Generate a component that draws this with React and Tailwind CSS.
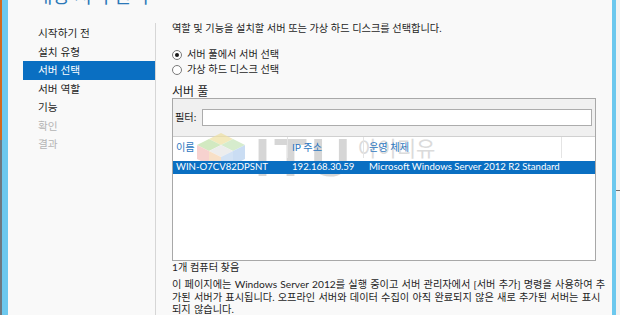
import React from 'react';

const navItems = [
  { label: '시작하기 전' },
  { label: '설치 유형' },
  { label: '서버 선택', active: true },
  { label: '서버 역할' },
  { label: '기능' },
  { label: '확인', disabled: true },
  { label: '결과', disabled: true },
];

const Radio = ({ checked, label }) => (
  <div className="flex items-center h-[15px]">
    <span className="w-[10px] h-[10px] rounded-full border border-[#7a7a7a] bg-white flex items-center justify-center">
      {checked && <span className="w-[4px] h-[4px] rounded-full bg-[#1a1a1a]" />}
    </span>
    <span className="ml-[5px]">{label}</span>
  </div>
);

// faded ITU watermark, drawn under the list text
const Watermark = () => (
  <div className="absolute left-[20px] top-[-6px] flex items-start opacity-70 pointer-events-none">
    <svg width="56" height="38" viewBox="0 0 56 38">
      <polygon points="28,2 40,8 28,14 16,8" fill="#eee0a0" />
      <polygon points="16,8 28,14 16,20 4,14" fill="#bfe0a8" />
      <polygon points="40,8 52,14 40,20 28,14" fill="#c6e4b8" />
      <polygon points="28,14 40,20 28,26 16,20" fill="#e6e6e6" />
      <polygon points="4,14 16,20 16,34 4,28" fill="#f4c0bc" />
      <polygon points="16,20 28,26 28,38 16,34" fill="#f6d4b0" />
      <polygon points="28,26 40,20 40,34 28,38" fill="#c0d6f0" />
      <polygon points="40,20 52,14 52,28 40,34" fill="#b4d0ee" />
    </svg>
    <span className="ml-[6px] mt-[-1px] text-[54px] leading-none font-bold text-[#c6c6c6] font-['Liberation_Sans',sans-serif] tracking-[4px]">
      ITU
    </span>
    <span className="ml-[4px] mt-[6px] text-[21px] leading-none text-[#cccccc] font-['Noto_Sans_CJK_KR',sans-serif]">
      아이티유
    </span>
  </div>
);

export default function App() {
  return (
    <div className="w-[620px] h-[315px] flex overflow-hidden bg-[#f9f9f9] text-[10.2px] text-[#1e1e1e] font-['Lato','Noto_Sans_CJK_KR',sans-serif]">
      {/* window edge behind */}
      <div className="w-[2px] shrink-0 flex flex-col">
        <div className="h-[140px] bg-[#d2691e]" />
        <div className="flex-1 bg-[#6e7880]" />
      </div>
      <div className="w-[6px] shrink-0 bg-[#6cc8ee]" />

      {/* main window */}
      <div className="flex-1 min-w-0 flex flex-col">
        <div className="h-[23px] shrink-0 overflow-hidden pl-[27px]">
          <div className="mt-[-15px] text-[19px] leading-[20px] text-[#2b78b8] font-['Noto_Sans_CJK_KR',sans-serif]">
            대상 서버 선택
          </div>
        </div>

        <div className="flex flex-1 min-h-0">
          {/* steps */}
          <div className="w-[148px] shrink-0 pt-[1px] pl-[15px] border-r border-[#d6d6d6] flex flex-col text-[10.7px]">
            {navItems.map((item) => (
              <div
                key={item.label}
                className={`h-[18.5px] shrink-0 flex items-center pl-[15px] ${
                  item.active ? 'bg-[#0a6fc2] text-white' : item.disabled ? 'text-[#b4b4b4]' : ''
                }`}
              >
                {item.label}
              </div>
            ))}
          </div>

          {/* content */}
          <div className="flex-1 min-w-0 pl-[16px] flex flex-col">
            <div className="h-[12px] shrink-0 flex items-center whitespace-nowrap">
              역할 및 기능을 설치할 서버 또는 가상 하드 디스크를 선택합니다.
            </div>
            <div className="mt-[12px] shrink-0 flex flex-col">
              <Radio checked label="서버 풀에서 서버 선택" />
              <Radio label="가상 하드 디스크 선택" />
            </div>
            <div className="mt-[9px] h-[12px] shrink-0 flex items-center text-[12px]">서버 풀</div>

            <div className="w-[424px] h-[163px] shrink-0 border border-[#a8a8a8] flex flex-col">
              <div className="h-[38px] bg-[#f0f0f0] border-b border-[#d0d0d0] flex items-center pl-[2px] pr-[3px]">
                <span className="w-[27px]">필터:</span>
                <div className="flex-1 h-[17px] bg-white border border-[#acacac]" />
              </div>
              <div className="relative flex-1 bg-white">
                <Watermark />
                <div className="relative h-[21px] flex text-[#2d78c0]">
                  <div className="w-[115px] pl-[3px] pt-[3px] border-r border-[#e4e4e4]">이름</div>
                  <div className="w-[76px] pl-[4px] pt-[3px] border-r border-[#e4e4e4]">IP 주소</div>
                  <div className="w-[198px] pl-[5px] pt-[3px] border-r border-[#e4e4e4]">운영 체제</div>
                </div>
                <div className="relative mt-[3px] h-[13px] bg-[#0a6fc2] text-white text-[9.6px] flex items-center whitespace-nowrap">
                  <div className="w-[115px] pl-[3px]">WIN-O7CV82DPSNT</div>
                  <div className="w-[76px] pl-[4px]">192.168.30.59</div>
                  <div className="pl-[5px]">Microsoft Windows Server 2012 R2 Standard</div>
                </div>
              </div>
            </div>

            <div className="mt-[1px] h-[12px] shrink-0 flex items-center">1개 컴퓨터 찾음</div>
            <div className="mt-[4px] shrink-0 leading-[12.7px] whitespace-nowrap [word-spacing:0.6px]">
              이 페이지에는 Windows Server 2012를 실행 중이고 서버 관리자에서 [서버 추가] 명령을 사용하여 추
              <br />
              가된 서버가 표시됩니다. 오프라인 서버와 데이터 수집이 아직 완료되지 않은 새로 추가된 서버는 표시
              <br />
              되지 않습니다.
            </div>
          </div>
        </div>
      </div>

      {/* right edge */}
      <div className="w-[4px] shrink-0 bg-[#6cc8ee]" />
      <div className="w-[4px] shrink-0 flex flex-col bg-[#f2f2f2]">
        <div className="h-[190px]" />
        <div className="h-[1px] bg-[#707070]" />
      </div>
    </div>
  );
}
